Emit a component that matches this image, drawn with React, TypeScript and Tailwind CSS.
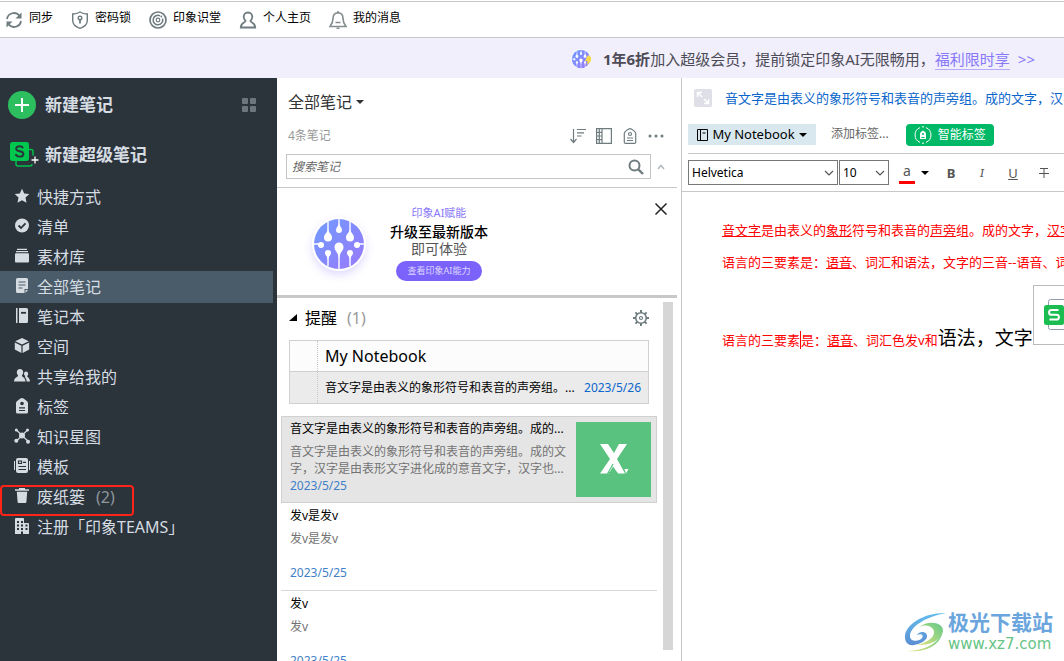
import React from 'react';

interface NavItem {
  label: string;
  icon: React.ReactNode;
  count?: number;
  active?: boolean;
  marked?: boolean;
}

const iconClass = 'mb-0.5 h-4 w-4 shrink-0';

const toolbarItems: Array<{ label: string; icon: React.ReactNode }> = [
  {
    label: '同步',
    icon: (
      <svg viewBox="0 0 18 18" className="h-[18px] w-[18px]" fill="none" stroke="#6f7c7f" strokeWidth="1.8">
        <path d="M2 8a7 7 0 0 1 12.5-3.2" />
        <path d="M16 10a7 7 0 0 1-12.5 3.2" />
        <path d="M16.5 1.5v6h-6z" fill="#6f7c7f" stroke="none" />
        <path d="M1.5 16.5v-6h6z" fill="#6f7c7f" stroke="none" />
      </svg>
    ),
  },
  {
    label: '密码锁',
    icon: (
      <svg viewBox="0 0 18 18" className="h-[18px] w-[18px]" fill="none" stroke="#6f7c7f" strokeWidth="1.4">
        <path d="M9 1c2 1.4 4.500 2 7.300 2v6.500c0 3.700-3.300 6.500-7.300 7.800-4-1.300-7.300-4.100-7.300-7.800V3C4.500 3 7 2.400 9 1z" />
        <circle cx="9" cy="7" r="1.800" />
        <path d="M9 9v3.500" strokeWidth="1.8" />
      </svg>
    ),
  },
  {
    label: '印象识堂',
    icon: (
      <svg viewBox="0 0 18 18" className="h-[18px] w-[18px]" fill="none" stroke="#6f7c7f">
        <circle cx="9" cy="9" r="8" strokeWidth="1.7" />
        <path d="M11 4.700A4.800 4.800 0 1 0 13.500 7.500" strokeWidth="1.5" />
        <circle cx="9" cy="9" r="1.800" strokeWidth="1.200" />
        <circle cx="12.300" cy="5.500" r="0.900" fill="#6f7c7f" stroke="none" />
      </svg>
    ),
  },
  {
    label: '个人主页',
    icon: (
      <svg viewBox="0 0 18 18" className="h-[18px] w-[18px]" fill="none" stroke="#6f7c7f" strokeWidth="1.800">
        <path d="M9 1.500c-2.800 0-4.300 1.900-4.300 4.300 0 1.700.8 3.200 1.900 4.200-.2 1.600-4.600 1.400-4.800 6.500h14.400c-.2-5.100-4.600-4.900-4.800-6.500 1.100-1 1.900-2.500 1.900-4.200 0-2.400-1.500-4.300-4.300-4.300z" />
      </svg>
    ),
  },
  {
    label: '我的消息',
    icon: (
      <svg viewBox="0 0 18 18" className="h-[18px] w-[18px]" fill="none" stroke="#858c8e" strokeWidth="1.600">
        <path d="M9 1.800C5.500 2 4 4.500 4 7.500 4 11 3.500 12.500 1 15.500h16C14.500 12.500 14 11 14 7.500 14 4.500 12.500 2 9 1.800z" />
        <path d="M9 0v2M6.500 11.500h5M7.500 17.300h3" />
      </svg>
    ),
  },
];

const navItems: NavItem[] = [
  {
    label: '快捷方式',
    icon: (
      <svg viewBox="0 0 16 16" className={iconClass} fill="currentColor">
        <path d="m8 .8 2.200 4.700 5.100.6-3.800 3.500 1 5.100L8 12.200l-4.500 2.500 1-5.100L.7 6.100l5.100-.6z" />
      </svg>
    ),
  },
  {
    label: '清单',
    icon: (
      <svg viewBox="0 0 16 16" className={iconClass}>
        <circle cx="8" cy="7.500" r="7" fill="currentColor" />
        <path d="m4.500 7.500 2.500 2.500 4.500-4.700" fill="none" stroke="#2b333b" strokeWidth="1.800" />
      </svg>
    ),
  },
  {
    label: '素材库',
    icon: (
      <svg viewBox="0 0 16 16" className={iconClass} fill="currentColor">
        <path d="M3 .8h10v1.200H3zM2 3h12v1.200H2z" />
        <rect x="1" y="5.200" width="14" height="9.300" rx="1" />
      </svg>
    ),
  },
  {
    label: '全部笔记',
    active: true,
    icon: (
      <svg viewBox="0 0 16 16" className={iconClass}>
        <path d="M3.500 0h9A1.500 1.500 0 0 1 14 1.500V11h-3.500v4h-7A1.500 1.500 0 0 1 2 13.500v-12A1.500 1.500 0 0 1 3.500 0zM11.500 12H14l-2.500 3z" fill="currentColor" />
        <path d="M4.500 4h7M4.500 7h7M4.500 10h4" stroke="#4a5c69" strokeWidth="1.200" />
      </svg>
    ),
  },
  {
    label: '笔记本',
    icon: (
      <svg viewBox="0 0 16 16" className={iconClass}>
        <path d="M2 0h1.500v15H2zM5 0h7.500A1.500 1.500 0 0 1 14 1.500v12a1.500 1.500 0 0 1-1.500 1.500H5z" fill="currentColor" />
        <path d="M7 4.800h5" stroke="#2b333b" strokeWidth="1.800" />
      </svg>
    ),
  },
  {
    label: '空间',
    icon: (
      <svg viewBox="0 0 16 16" className={iconClass} fill="currentColor">
        <path d="m8 0 6.800 3.300L8 6.600 1.200 3.300zM.8 4.500l6.600 3.200V15L.8 11.500zM15.200 4.500 8.600 7.700V15l6.600-3.500z" />
      </svg>
    ),
  },
  {
    label: '共享给我的',
    icon: (
      <svg viewBox="0 0 16 16" className={iconClass} fill="currentColor">
        <path d="M6 1c2 0 3.200 1.300 3.200 3.300 0 1.300-.5 2.500-1.300 3.200 0 1.700 3.100 1.300 3.600 6H0c.5-4.700 4.100-4.300 4.100-6C3.300 6.800 2.800 5.600 2.800 4.300 2.800 2.300 4 1 6 1z" />
        <path d="M12 3.500c1.400 0 2.200 1 2.200 2.300 0 1-.4 1.700-1 2.300 0 1.600 2.500 1.200 2.800 5.400h-3.300c-.2-2.500-1-3.500-2-4.500.5-.4.6-.6.6-.9-.9-.8-1.300-1.400-1.300-2.300 0-1.300.8-2.300 2-2.300z" />
      </svg>
    ),
  },
  {
    label: '标签',
    icon: (
      <svg viewBox="0 0 16 16" className={iconClass}>
        <path d="M8 0c1.500 0 6 3.500 6 5v9a1.500 1.500 0 0 1-1.500 1.500h-9A1.500 1.500 0 0 1 2 14V5c0-1.500 4.500-5 6-5z" fill="currentColor" />
        <circle cx="8" cy="5.500" r="1.800" fill="#2b333b" />
        <path d="M5 9.800h6M5 12.500h6" stroke="#2b333b" strokeWidth="1.200" />
      </svg>
    ),
  },
  {
    label: '知识星图',
    icon: (
      <svg viewBox="0 0 16 16" className={iconClass} fill="currentColor">
        <path d="M2.500 2 8 7.500 13.500 2M2.500 13 8 7.500l6.500 6" fill="none" stroke="currentColor" strokeWidth="1.200" />
        <circle cx="8" cy="7.500" r="3" />
        <circle cx="2.300" cy="2" r="1.500" />
        <circle cx="13.500" cy="2" r="1.500" />
        <circle cx="2.300" cy="12.800" r="2" />
        <circle cx="14" cy="13.800" r="2" />
      </svg>
    ),
  },
  {
    label: '模板',
    icon: (
      <svg viewBox="0 0 16 16" className={iconClass}>
        <rect x="2" y="0" width="12" height="15" rx="2" fill="currentColor" />
        <path d="M.5 3v9M15.500 3v9" stroke="currentColor" />
        <path d="M4.500 3h3v2.500h-3zM9 4.300h3M4.500 8.500H12M4.500 11.500H12" fill="none" stroke="#2b333b" strokeWidth="1.200" />
      </svg>
    ),
  },
  {
    label: '废纸篓',
    count: 2,
    marked: true,
    icon: (
      <svg viewBox="0 0 16 16" className={iconClass} fill="currentColor">
        <path d="M5 1.300V0h6v1.300h4v1.400H1V1.300zM2.800 3.800h10.400l-.8 10.200a1 1 0 0 1-1 1H4.600a1 1 0 0 1-1-1z" />
      </svg>
    ),
  },
  {
    label: '注册「印象TEAMS」',
    icon: (
      <svg viewBox="0 0 16 16" className={iconClass}>
        <path d="M1 1a1 1 0 0 1 1-1h7a1 1 0 0 1 1 1v4h4a1 1 0 0 1 1 1v10H9v-2.500H7V16H1z" fill="currentColor" />
        <path d="M3 4h2M7 4h2M3 7.500h2M7 7.500h2M11.500 7.500h2M3 11h2M7 11h2M11.500 11h2" stroke="#2b333b" strokeWidth="1.800" />
      </svg>
    ),
  },
];

const notes = [
  { title: '发v是发v', body: '发v是发v', date: '2023/5/25' },
  { title: '发v', body: '发v', date: '2023/5/25' },
];

function Toolbar() {
  return (
    <header className="mt-px flex h-[37px] shrink-0 items-center gap-[18px] border-y border-[#c8c8c8] bg-white pl-[5px]">
      {toolbarItems.map(({ label, icon }) => (
        <button key={label} className="flex items-center gap-1.5 text-xs leading-4 text-black">
          {icon}
          <span className="pb-1">{label}</span>
        </button>
      ))}
    </header>
  );
}

function BrainLogo({ className }: { className: string }) {
  return (
    <svg viewBox="0 0 54 54" className={className}>
      <defs>
        <linearGradient id="brain" x1="0" y1="0" x2="1" y2="1">
          <stop offset="0" stopColor="#6f9cff" />
          <stop offset="1" stopColor="#9a78fb" />
        </linearGradient>
      </defs>
      <circle cx="27" cy="27" r="27" fill="#fff" />
      <circle cx="27" cy="27" r="25" fill="url(#brain)" />
      <g stroke="#fff" strokeWidth="1.400">
        <path d="M16 4v16M27 2v12M38 4v16M27 27v25M16 34v15M38 34v15M2 27h8M44 27h8" />
      </g>
      <g fill="#fff">
        <path d="M16 12c.6 4 4 5 4 8.500a4 4 0 0 1-8 0c0-3.500 3.400-4.500 4-8.500z" />
        <path d="M38 12c.6 4 4 5 4 8.500a4 4 0 0 1-8 0c0-3.500 3.400-4.500 4-8.500z" />
        <path d="M27 6c.4 3 3 4.500 3 7a3 3 0 0 1-6 0c0-2.500 2.600-4 3-7z" />
        <path d="M27 42c-.6-7-4.500-8-4.500-12a4.500 4.500 0 0 1 9 0c0 4-3.900 5-4.500 12z" />
        <path d="M16 43c-.4-4-3-4.500-3-7a3 3 0 0 1 6 0c0 2.500-2.600 3-3 7z" />
        <path d="M38 43c-.4-4-3-4.500-3-7a3 3 0 0 1 6 0c0 2.500-2.600 3-3 7z" />
        <circle cx="9" cy="28" r="3" />
        <circle cx="45" cy="28" r="3" />
      </g>
    </svg>
  );
}

function PromoBar() {
  return (
    <div className="flex h-10 shrink-0 items-center justify-end bg-[#f0effb] pt-0.5 pr-[29px] text-[15px] leading-5 whitespace-nowrap text-[#4d4b57]">
      <span className="relative mr-3">
        <BrainLogo className="h-5 w-5" />
        <svg viewBox="0 0 6 10" className="absolute top-1.5 right-0 h-2.5 w-1.5" fill="#f5d94a">
          <path d="M3 0 6 2v4L2 10l.5-4H0z" />
        </svg>
      </span>
      <p>
        <b>1年6折</b>加入超级会员，提前锁定印象AI无限畅用，
      </p>
      <a href="#offer" className="flex items-center gap-2 text-[#8878fa]">
        <span className="border-b border-[#b5aafb] leading-5">福利限时享</span>
        <span>&gt;&gt;</span>
      </a>
    </div>
  );
}

function Sidebar() {
  return (
    <aside className="w-[277px] shrink-0 bg-[#2b333b] pt-[13px] text-[#d5dce2]">
      <div className="flex h-7 items-center pr-[21px] pl-2">
        <button className="flex items-center gap-[9px] text-[17px] leading-6 font-bold">
          <svg viewBox="0 0 28 28" className="h-7 w-7">
            <circle cx="14" cy="14" r="14" fill="#2dbe60" />
            <path d="M14 7v14M7 14h14" stroke="#fff" strokeWidth="2" />
          </svg>
          新建笔记
        </button>
        <button aria-label="视图" className="ml-auto">
          <svg viewBox="0 0 14 14" className="h-3.5 w-3.5" fill="#6b777d">
            <rect width="6" height="6" rx="1" />
            <rect x="8" width="6" height="6" rx="1" />
            <rect y="8" width="6" height="6" rx="1" />
            <rect x="8" y="8" width="6" height="6" rx="1" />
          </svg>
        </button>
      </div>
      <button className="mt-[22px] flex h-7 items-center gap-1.5 pl-[9px] text-[17px] leading-6 font-bold">
        <svg viewBox="0 0 30 28" className="h-7 w-[30px]">
          <path d="M20 8.500h2a2 2 0 0 1 2 2v4M7 20v3a2 2 0 0 0 2 2h12a2 2 0 0 0 2-2" fill="none" stroke="#00c04b" strokeWidth="1.500" />
          <rect x="1" y="1" width="19" height="19" rx="2.500" fill="#00c84f" />
          <path d="M14 7.200c-.5-1.500-1.700-2-3.400-2-2 0-3.400.9-3.400 2.500 0 3.700 7.200 1.500 7.200 5.200 0 1.700-1.500 2.700-3.700 2.700-2 0-3.500-.8-3.900-2.500" fill="none" stroke="#2b333b" strokeWidth="1.900" />
          <path d="M26 15.500v7M22.500 19h7" stroke="#fff" strokeWidth="1.300" />
        </svg>
        新建超级笔记
      </button>
      <nav className="mt-3">
        {navItems.map(({ label, icon, count, active, marked }) => (
          <button
            key={label}
            className={`relative -mb-0.5 flex h-8 w-[273px] items-center gap-[7px] pl-3.5 text-base leading-6 ${
              active ? 'bg-[#4a5c69]' : ''
            }`}
          >
            {icon}
            <span>{label}</span>
            {count && <span className="ml-1 text-[#8f979c]">({count})</span>}
            {marked && <span className="absolute top-1 left-0 h-[31px] w-[134px] rounded-sm border-2 border-[#ff2318]" />}
          </button>
        ))}
      </nav>
    </aside>
  );
}

function Caret() {
  return (
    <svg viewBox="0 0 8 4" className="h-1 w-2" fill="currentColor">
      <path d="M0 0h8L4 4z" />
    </svg>
  );
}

function ListHeader() {
  return (
    <div className="mr-1 border-b border-[#c8c8c8] pt-3 pr-3 pb-2 pl-[9px]">
      <button className="flex items-center gap-1 pl-0.5 text-base leading-6 text-[#333]">
        全部笔记
        <Caret />
      </button>
      <div className="mt-3 flex h-5 items-center pr-px pl-0.5 text-xs leading-5 text-[#999]">
        <span>4条笔记</span>
        <div className="ml-auto flex items-center gap-2.5 text-[#6f7c7f]">
          <button aria-label="排序">
            <svg viewBox="0 0 16 16" className="h-4 w-4" fill="none" stroke="currentColor" strokeWidth="1.200">
              <path d="M3.500 1v13.500M.5 11l3 3.500 3-3.500M7 1.500h9M7 4.800h7M7 8h4.500" />
            </svg>
          </button>
          <button aria-label="布局">
            <svg viewBox="0 0 16 16" className="h-4 w-4" fill="none" stroke="currentColor" strokeWidth="1.200">
              <path d="M.6.6h14.800v14.800H.6zM6 1v14.500M3.300 1v14.500M.5 4.300H6M.5 8H6M.5 11.700H6" />
            </svg>
          </button>
          <button aria-label="标签">
            <svg viewBox="0 0 16 16" className="h-4 w-4" fill="none" stroke="currentColor" strokeWidth="1.200">
              <path d="M8 .6c1.500 0 5.700 3.200 5.700 4.700v8.900a1.200 1.200 0 0 1-1.200 1.200h-9a1.200 1.200 0 0 1-1.200-1.200V5.300C2.300 3.800 6.500.6 8 .6zM5 10h6M5 12.500h6" />
              <circle cx="8" cy="6" r="1.500" />
            </svg>
          </button>
          <button aria-label="更多">
            <svg viewBox="0 0 16 16" className="h-4 w-4" fill="currentColor">
              <circle cx="2" cy="8" r="1.500" />
              <circle cx="8" cy="8" r="1.500" />
              <circle cx="14" cy="8" r="1.500" />
            </svg>
          </button>
        </div>
      </div>
      <div className="mt-2 flex items-center gap-1.5">
        <label className="flex h-[25px] flex-1 items-center border border-[#c4c4c4] pr-1.5 pl-[5px]">
          <input
            type="text"
            aria-label="搜索笔记"
            placeholder="搜索笔记"
            className="min-w-0 flex-1 text-xs leading-4 italic outline-none placeholder:text-[#666]"
          />
          <svg viewBox="0 0 16 16" className="h-4 w-4" fill="none" stroke="#6f7c7f" strokeWidth="2">
            <circle cx="6.500" cy="6.500" r="5" />
            <path d="m10.300 10.300 4.700 4.700" strokeWidth="2.400" />
          </svg>
        </label>
        <button aria-label="收起">
          <svg viewBox="0 0 8 6" className="h-1.5 w-2" fill="none" stroke="#b0b8bb" strokeWidth="1.500">
            <path d="m1 5 3-3.500L7 5" />
          </svg>
        </button>
      </div>
    </div>
  );
}

function PromoCard() {
  return (
    <section className="mr-1 flex h-[110px] items-start border-b-3 border-[#c8c8c8] pr-[9px] pl-[35px]">
      <BrainLogo className="mt-[29px] h-[54px] w-[54px] rounded-full shadow-[0_4px_8px_rgba(130,110,255,0.25)]" />
      <div className="ml-[22px] flex w-[102px] flex-col items-center pt-[17px] text-center whitespace-nowrap">
        <p className="text-[11px] leading-4 text-[#8878fa]">印象AI赋能</p>
        <p className="mt-0.5 text-sm leading-[17px] font-medium text-black">升级至最新版本</p>
        <p className="text-sm leading-[17px] text-[#555]">即可体验</p>
        <button className="mt-1 h-5 rounded-full bg-[#7a62fb] px-3 text-[9px] leading-5 text-[#ddd6ff]">查看印象AI能力</button>
      </div>
      <button aria-label="关闭" className="mt-3.5 ml-auto">
        <svg viewBox="0 0 14 14" className="h-3.5 w-3.5" fill="none" stroke="#222" strokeWidth="1.500">
          <path d="m1.500 1.500 11 11M12.500 1.500l-11 11" />
        </svg>
      </button>
    </section>
  );
}

function Reminders() {
  return (
    <section className="pr-3.5 pl-2">
      <div className="flex h-10 items-center">
        <button className="flex items-center gap-2 text-base leading-6 text-black">
          <svg viewBox="0 0 8 8" className="h-2 w-2">
            <path d="M8 0v7H0z" />
          </svg>
          <span>
            提醒<span className="ml-2.5 text-[#999]">(1)</span>
          </span>
        </button>
        <button aria-label="设置" className="ml-auto">
          <svg viewBox="0 0 16 16" className="h-4 w-4" fill="none" stroke="#6f7c7f">
            <circle cx="8" cy="8" r="5.300" strokeWidth="1.600" />
            <circle cx="8" cy="8" r="1.500" strokeWidth="1.200" />
            <path d="M8 0v3M8 13v3M0 8h3M13 8h3M2.400 2.400l2 2M11.600 11.600l2 2M2.400 13.600l2-2M11.600 4.400l2-2" strokeWidth="2" />
          </svg>
        </button>
      </div>
      <table className="mt-0.5 w-full border-collapse border border-[#d0d0d0] text-left">
        <tbody>
          <tr className="h-[31px] border-b border-[#d0d0d0] bg-[#fcfcfc]">
            <td className="w-7 border-r border-dotted border-r-[#c8c8c8] p-0" />
            <th colSpan={2} className="px-[7px] py-0 text-base leading-6 font-normal text-black">
              My Notebook
            </th>
          </tr>
          <tr className="h-8 bg-[#ebebeb] text-xs leading-4">
            <td className="border-r border-dotted border-r-[#c8c8c8] p-0" />
            <td className="py-0 pr-0 pl-[7px] whitespace-nowrap text-black">音文字是由表义的象形符号和表音的声旁组。...</td>
            <td className="py-0 pr-[7px] pl-0 text-right text-[#0a66cc]">2023/5/26</td>
          </tr>
        </tbody>
      </table>
    </section>
  );
}

function NoteList() {
  return (
    <section className="mt-3 pr-1.5 text-xs leading-[17px]">
      <article className="flex h-[87px] justify-between border border-[#d0d0d0] bg-[#e5e5e5] pt-[5px] pr-[5px] pl-2">
        <div className="w-[278px]">
          <h3 className="-mt-0.5 whitespace-nowrap text-black">音文字是由表义的象形符号和表音的声旁组。成的...</h3>
          <p className="mt-1.5 text-[#737373]">
            音文字是由表义的象形符号和表音的声旁组。成的文字，汉字是由表形文字进化成的意音文字，汉字也...
          </p>
          <time className="block text-[#3f7fc8]">2023/5/25</time>
        </div>
        <svg viewBox="0 0 75 75" className="h-[75px] w-[75px]">
          <path d="M0 0h75v75H0z" fill="#5ac27f" />
          <path d="M24 22h8l6 9 5-9h8L41 37l8 14.500h-7l-5-7-4 7h-9l10-14.500z" fill="#fff" />
          <path d="m37 42-5 9 5-1.500 5 2" fill="none" stroke="#5ac27f" strokeWidth="1.200" />
          <path d="M48.500 47h4l-2.500 4.500z" fill="#fff" />
        </svg>
      </article>
      {notes.map(({ title, body, date }) => (
        <article key={title} className="flex h-[88px] flex-col border-b border-[#d8d8d8] pt-1 pl-[9px]">
          <h3 className="text-black">{title}</h3>
          <p className="mt-1.5 text-[#737373]">{body}</p>
          <time className="mt-[17px] text-[#3f7fc8]">{date}</time>
        </article>
      ))}
    </section>
  );
}

function NotesColumn() {
  return (
    <section className="flex w-[405px] shrink-0 flex-col border-r border-[#c8c8c8] bg-white">
      <ListHeader />
      <PromoCard />
      <div className="flex min-h-0 flex-1">
        <div className="min-w-0 flex-1 overflow-hidden pl-1">
          <Reminders />
          <NoteList />
        </div>
        <div className="mt-1 mr-2 mb-[11px] w-2.5 bg-[#d6d6d6]" />
      </div>
    </section>
  );
}

function Dropdown({ label, value, className }: { label: string; value: string; className: string }) {
  return (
    <div className={`relative ${className}`}>
      <select
        aria-label={label}
        className="block h-[25px] w-full appearance-none border border-[#777] bg-white pr-5 pl-[3px] text-xs leading-5 text-black"
      >
        <option>{value}</option>
      </select>
      <svg
        viewBox="0 0 10 6"
        className="pointer-events-none absolute top-2.5 right-1 h-1.5 w-2.5"
        fill="none"
        stroke="#555"
        strokeWidth="1.200"
      >
        <path d="m1 1 4 4 4-4" />
      </svg>
    </div>
  );
}

function EditorHeader() {
  return (
    <div className="whitespace-nowrap">
      <div className="flex h-10 items-center gap-[13px] pl-3">
        <button aria-label="展开" className="shrink-0">
          <svg viewBox="0 0 18 18" className="h-[18px] w-[18px]">
            <rect width="18" height="18" rx="2" fill="#dfe0e7" />
            <path d="M3.500 8V3.500H8M10 14.500h4.500V10M4 4l4 4M14 14l-4-4" fill="none" stroke="#fff" strokeWidth="1.400" />
          </svg>
        </button>
        <h1 className="text-[13px] leading-5 text-[#0a66cc]">音文字是由表义的象形符号和表音的声旁组。成的文字，汉字是由表形文字</h1>
      </div>
      <div className="ml-1.5 flex h-[36px] items-start border-b border-[#c8c8c8] pt-1.5">
        <button className="flex h-[21px] w-32 items-center justify-center gap-1 bg-[#d9e8ef] text-[13px] leading-5 text-black">
          <svg viewBox="0 0 11 12" className="h-3 w-[11px]" fill="none" stroke="currentColor">
            <path d="M.5.500h10v11H.5zM3.500.500v11M5.500 4h3" />
          </svg>
          <span className="pb-0.5">My Notebook</span>
          <Caret />
        </button>
        <button className="ml-[15px] text-xs leading-5 text-[#666]">添加标签...</button>
        <button className="ml-[17px] flex h-[22px] items-center gap-1.5 rounded-sm bg-[#00b866] px-2 text-xs leading-5 text-white">
          <svg viewBox="0 0 18 18" className="h-[18px] w-[18px]" fill="none" stroke="#fff">
            <path d="M6 1.600A8 8 0 0 0 6 16.400M12 1.600a8 8 0 0 1 0 14.800" />
            <path d="M8 .8h2M8 17.200h2" />
            <path d="M9 4.500c1.500.8 3 2 3 3v5.500H6V7.500C6 6.500 7.500 5.300 9 4.500z" fill="#fff" stroke="none" />
            <path d="M7.500 11.500h3" stroke="#00b866" />
            <circle cx="9" cy="8" r="1" fill="#00b866" stroke="none" />
          </svg>
          智能标签
        </button>
      </div>
      <div className="flex h-[38px] items-center border-b border-[#c8c8c8] pl-1.5 text-[#555]">
        <Dropdown label="字体" value="Helvetica" className="w-[150px]" />
        <Dropdown label="字号" value="10" className="ml-px w-[50px]" />
        <button aria-label="文字颜色" className="ml-2.5 flex items-center gap-1.5 text-black">
          <span className="h-[22px] w-4 border-b-3 border-[#f00] text-sm leading-[18px] text-[#555]">a</span>
          <Caret />
        </button>
        <div className="ml-3.5 flex gap-[15px] text-[13px] leading-5">
          <button className="w-4 font-bold">B</button>
          <button className="w-4 font-serif italic">I</button>
          <button className="w-4 underline">U</button>
          <button aria-label="删除线" className="flex w-4 items-center justify-center">
            <svg viewBox="0 0 10 10" className="h-2.5 w-2.5" fill="none" stroke="currentColor">
              <path d="M1 .5h8M5 .5V10M0 5.500h10" />
            </svg>
          </button>
        </div>
      </div>
    </div>
  );
}

function Attachment() {
  return (
    <span className="inline-block h-[60px] w-40 overflow-hidden border border-[#bbb] bg-white pt-3 pl-2.5">
      <svg viewBox="0 0 36 34" className="h-[34px] w-9">
        <rect x="4.500" y="1.500" width="30" height="30" rx="2" fill="#fff" stroke="#8f9bb0" />
        <rect y="7" width="20" height="20" rx="2.500" fill="#1bbd50" />
        <path d="M14.500 12H7.500a2.200 2.200 0 0 0 0 4.800h5a2.200 2.200 0 0 1 0 4.800H5.500" fill="none" stroke="#fff" strokeWidth="2" />
      </svg>
    </span>
  );
}

function Editor() {
  return (
    <main className="min-w-0 flex-1 overflow-hidden bg-white">
      <EditorHeader />
      <div className="pt-[22px] pl-10 text-[13px] leading-8 whitespace-nowrap text-[#f00]">
        <p>
          <u>音文字</u>是由表义的<u>象形</u>符号和表音的<u>声旁</u>组。成的文字，<u>汉字</u>是由表形文字
        </p>
        <p>
          语言的三要素是：<u>语音</u>、词汇和语法，文字的三音--语音、词汇
        </p>
        <p className="mt-[7px]">
          语言的三要素<span className="border-l border-[#f00]">是</span>：<u>语音</u>、词汇色发v和
          <span className="text-[19px] text-black">语法，文字</span>
          <Attachment />
        </p>
      </div>
    </main>
  );
}

function Watermark() {
  return (
    <div className="absolute right-[11px] bottom-[7px] flex items-center gap-0.5">
      <svg viewBox="0 0 42 40" className="h-10 w-[42px]">
        <defs>
          <linearGradient id="swirl" x1="0" y1="0" x2="0" y2="1">
            <stop offset="0" stopColor="#63bdec" />
            <stop offset="1" stopColor="#5c8fd4" />
          </linearGradient>
          <linearGradient id="leaf" x1="1" y1="0" x2="0" y2="1">
            <stop offset="0" stopColor="#62c98a" />
            <stop offset="1" stopColor="#dfe37a" />
          </linearGradient>
        </defs>
        <path d="M42 1C22 0 0 12 1 26c.4 5 4 8 9 7 6-1 12-4 13-8 1-5-7-7-10-2 4-2 7 0 5 3-3 4-12 4-12-2C6 14 24 4 42 1z" fill="url(#swirl)" />
        <path d="M15 15c7-4 16 0 15 6-1 6-9 10-17 12 12 1 25-5 26-14 1-8-14-12-24-4z" fill="url(#leaf)" />
        <path d="M3 39c14 0 28-5 35-17-3 12-18 19-35 17z" fill="url(#leaf)" />
      </svg>
      <div>
        <p className="text-[21px] leading-6 font-bold text-[#6aa5dd]">极光下载站</p>
        <p className="font-['DejaVu_Sans',sans-serif] text-[15px] leading-5 text-[#66c485]">www.xz7.com</p>
      </div>
    </div>
  );
}

export default function App() {
  return (
    <div className="relative flex h-screen flex-col overflow-hidden bg-white font-['Noto_Sans','Noto_Sans_CJK_SC',sans-serif]">
      <Toolbar />
      <PromoBar />
      <div className="flex min-h-0 flex-1">
        <Sidebar />
        <NotesColumn />
        <Editor />
      </div>
      <Watermark />
    </div>
  );
}
